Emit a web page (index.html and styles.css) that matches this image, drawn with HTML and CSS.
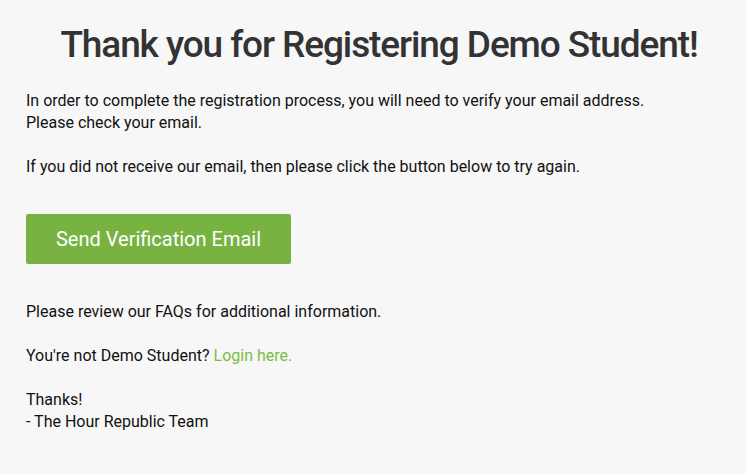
FILE: index.html
```html
<!DOCTYPE html>
<html>
<head>
<meta charset="utf-8">
<link rel="stylesheet" href="styles.css">
</head>
<body>
<main class="page">
  <h1 class="title">Thank you for Registering Demo Student!</h1>
  <p class="text">In order to complete the registration process, you will need to verify your email address.<br>Please check your email.</p>
  <p class="text">If you did not receive our email, then please click the button below to try again.</p>
  <div class="actions"><button class="btn">Send Verification Email</button></div>
  <p class="text">Please review our FAQs for additional information.</p>
  <p class="text">You're not Demo Student? <a class="link" href="#">Login here.</a></p>
  <p class="text">Thanks!<br>- The Hour Republic Team</p>
</main>
</body>
</html>
```
FILE: styles.css
```css
html, body {
  margin: 0;
  padding: 0;
  background: #f7f7f7;
}
body {
  font-family: Roboto, "Liberation Sans", sans-serif;
  color: #111;
  font-size: 16px;
  line-height: 22px;
}
.page {
  padding: 18px 26px 20px;
}
.title {
  margin: 0 0 18px;
  padding-left: 12px;
  text-align: center;
  font-size: 37px;
  font-weight: 500;
  line-height: 54px;
  color: #333;
  letter-spacing: -1.1px;
}
.text {
  margin: 0 0 22px;
}
.actions {
  margin: 36px 0 37px;
}
.btn {
  display: inline-block;
  width: 265px;
  height: 50px;
  border: none;
  border-radius: 2px;
  background: #78b342;
  color: #fff;
  font-family: Roboto, "Liberation Sans", sans-serif;
  font-size: 20px;
  padding: 0;
  cursor: pointer;
}
.link {
  color: #7bbd47;
  text-decoration: none;
}
```
